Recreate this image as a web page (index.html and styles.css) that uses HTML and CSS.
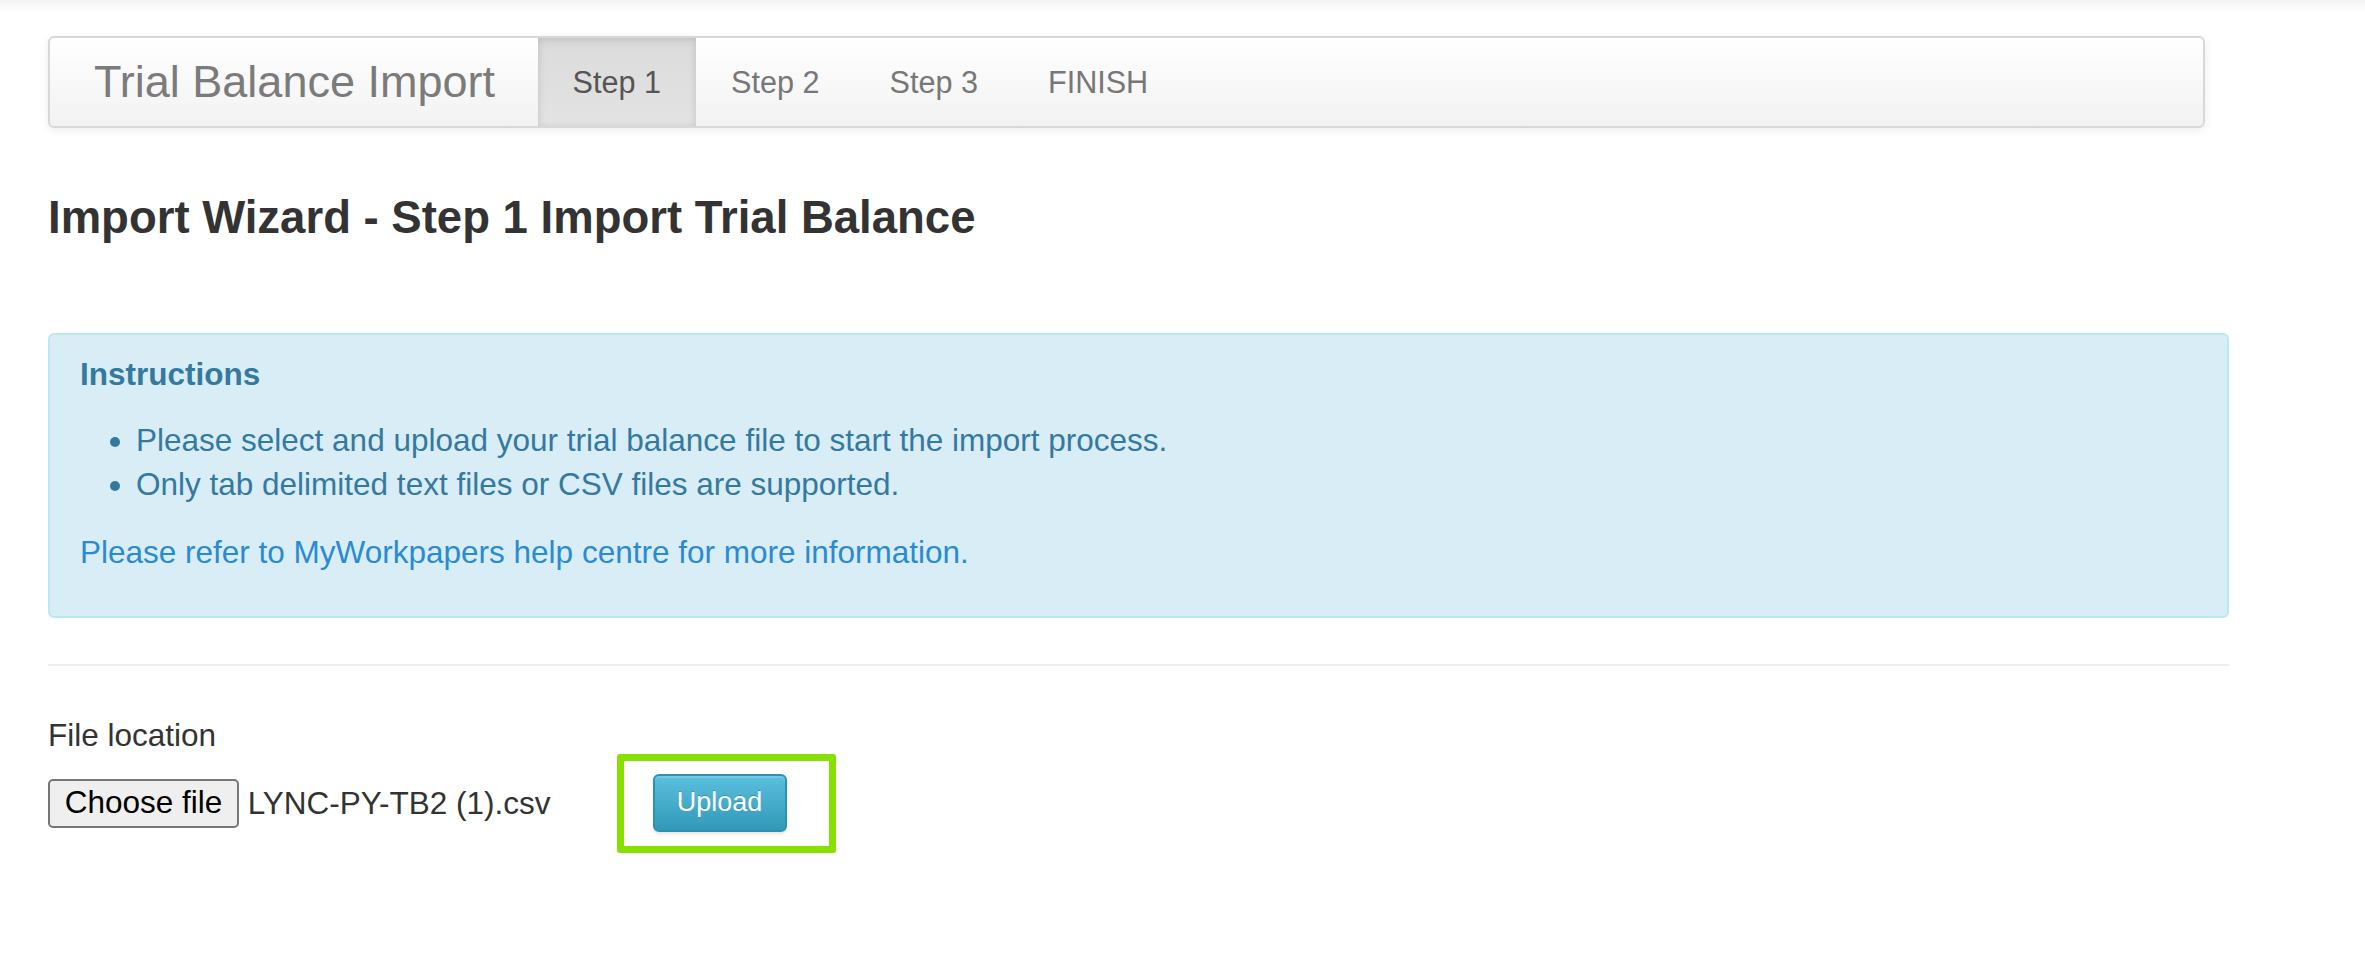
FILE: index.html
```html
<!DOCTYPE html>
<html lang="en">
<head>
<meta charset="utf-8">
<title>Trial Balance Import</title>
<link rel="stylesheet" href="styles.css">
</head>
<body>
<div class="page">
  <nav class="navbar">
    <span class="brand">Trial Balance Import</span>
    <ul class="steps">
      <li class="step active">Step 1</li>
      <li class="step">Step 2</li>
      <li class="step">Step 3</li>
      <li class="step">FINISH</li>
    </ul>
  </nav>

  <h2 class="title">Import Wizard - Step 1 Import Trial Balance</h2>

  <div class="alert">
    <div class="alert-title">Instructions</div>
    <ul class="alert-list">
      <li>Please select and upload your trial balance file to start the import process.</li>
      <li>Only tab delimited text files or CSV files are supported.</li>
    </ul>
    <p class="alert-note"><a class="alert-link" href="#">Please refer to MyWorkpapers help centre for more information.</a></p>
  </div>

  <hr class="divider">

  <div class="field">
    <label class="field-label">File location</label>
    <div class="file-row">
      <div class="file-control">
        <button class="file-btn" type="button">Choose file</button>
        <span class="file-name">LYNC-PY-TB2 (1).csv</span>
      </div>
      <div class="highlight">
        <button class="btn-upload" type="button">Upload</button>
      </div>
    </div>
  </div>
</div>
</body>
</html>
```

FILE: styles.css
```css
html, body {
  margin: 0;
  padding: 0;
}

body {
  font-family: "Liberation Sans", Arial, sans-serif;
  font-size: 31.5px;
  line-height: 44.5px;
  color: #333;
  background: #fff linear-gradient(#f3f3f3, #fff 12px) no-repeat;
}

.page {
  padding: 36px 136px 60px 48px;
}

/* Navbar */
.navbar {
  display: flex;
  align-items: stretch;
  height: 92px;
  box-sizing: border-box;
  margin-right: 24px;
  border: 2px solid #d8d8d8;
  border-radius: 6px;
  background: linear-gradient(#ffffff, #f2f2f2);
  box-shadow: 0 2px 10px rgba(0, 0, 0, 0.08);
  overflow: hidden;
}

.brand {
  display: flex;
  align-items: center;
  padding: 0 42.6px 0 44px;
  font-size: 45px;
  color: #7b7b7b;
  white-space: nowrap;
}

.steps {
  display: flex;
  list-style: none;
  margin: 0;
  padding: 0;
}

.step {
  display: flex;
  align-items: center;
  padding: 0 35px;
  font-size: 30.6px;
  color: #777;
  white-space: nowrap;
}

.step.active {
  color: #555;
  background: linear-gradient(#dbdbdb, #e3e3e3);
  box-shadow: inset 0 3px 10px rgba(0, 0, 0, 0.08), inset 2px 0 6px rgba(0, 0, 0, 0.03), inset -2px 0 6px rgba(0, 0, 0, 0.03);
}

/* Title */
.title {
  margin: 65px 0 0;
  font-size: 45.5px;
  font-weight: bold;
  line-height: 1.1;
  color: #333;
}

/* Alert */
.alert {
  margin-top: 90px;
  border: 2px solid #bce8f1;
  border-radius: 6px;
  background: #d9edf7;
  color: #3479a0;
  padding: 17px 30px 41px;
}

.alert-title {
  font-weight: bold;
}

.alert-list {
  margin: 21px 0 0;
  padding-left: 56px;
}

.alert-note {
  margin: 23.6px 0 0;
}

.alert-link {
  color: #2a8bd0;
  text-decoration: none;
}

/* Divider */
.divider {
  margin: 46.7px 0 0;
  border: 0;
  height: 2px;
  background: #eee;
}

/* File field */
.field-label {
  display: block;
  margin-top: 46.8px;
}

.file-row {
  display: flex;
  align-items: center;
  height: 49px;
  margin-top: 21px;
}

.file-control {
  display: flex;
  align-items: center;
  width: 569px;
  flex-shrink: 0;
}

.file-btn {
  height: 49px;
  box-sizing: border-box;
  padding: 0 14.7px;
  border: 2px solid #767676;
  border-radius: 5px;
  background: #efefef;
  font-family: "Liberation Sans", Arial, sans-serif;
  font-size: 31.5px;
  line-height: 1;
  color: #000;
}

.file-name {
  margin-left: 8.7px;
  color: #333;
  white-space: nowrap;
}

.highlight {
  display: flex;
  align-items: center;
  flex-shrink: 0;
  box-sizing: border-box;
  height: 99px;
  border: 7px solid #86e101;
  border-radius: 3px;
  padding: 13px 42.6px 14px 28.5px;
}

.btn-upload {
  width: 134px;
  height: 58px;
  box-sizing: border-box;
  padding: 0;
  border: 2px solid #2c92b2;
  border-radius: 6px;
  background: linear-gradient(#5bc0de, #3298b9);
  color: #fff;
  font-family: "Liberation Sans", Arial, sans-serif;
  font-size: 27px;
  line-height: 1;
  text-shadow: 0 -1px 0 rgba(0, 0, 0, 0.2);
  box-shadow: inset 0 2px 0 rgba(255, 255, 255, 0.15), 0 2px 3px rgba(0, 0, 0, 0.1);
}
```
